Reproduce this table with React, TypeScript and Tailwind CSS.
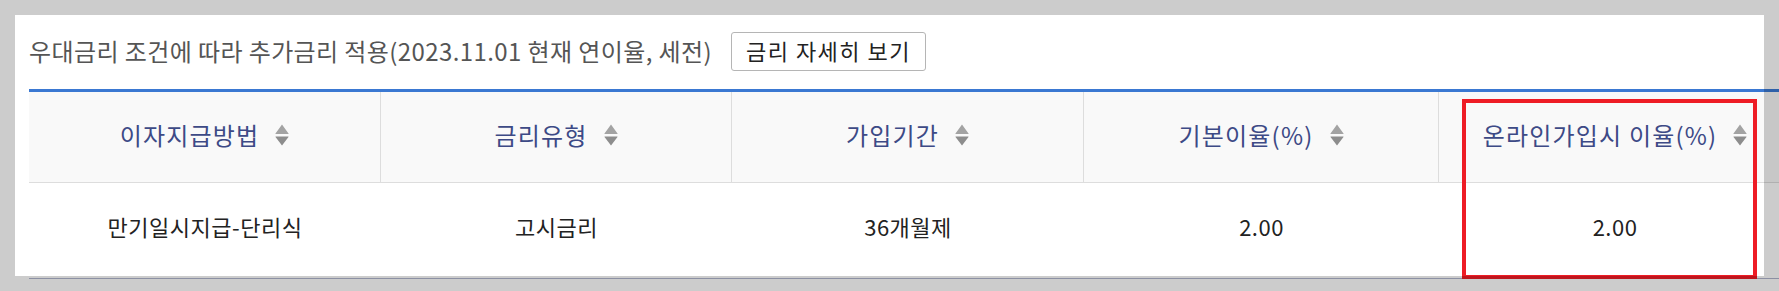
import React from 'react';

const columns = ['이자지급방법', '금리유형', '가입기간', '기본이율(%)', '온라인가입시 이율(%)'];
const row = ['만기일시지급-단리식', '고시금리', '36개월제', '2.00', '2.00'];

function SortIcon() {
  return (
    <svg width="14" height="22" viewBox="0 0 14 22" className="shrink-0">
      <path d="M7 0.5 L13.5 9.5 Q14 10 13 10 L1 10 Q0 10 0.5 9.5 Z" fill="#a3a3a3" />
      <path d="M1 12.5 L13 12.5 Q14 12.5 13.5 13 L7 21.5 L0.5 13 Q0 12.5 1 12.5 Z" fill="#8d8d8d" />
    </svg>
  );
}

export default function App() {
  return (
    <div className="relative h-[291px] w-full overflow-hidden bg-white font-['Noto_Sans_CJK_KR','Noto_Sans',sans-serif]">
      <div className="pl-[29px] pt-[32px]">
        {/* title + button */}
        <div className="flex h-[38px] items-center gap-[19px]">
          <p className="text-[24px] tracking-[0.4px] text-[#555]">
            우대금리 조건에 따라 추가금리 적용(2023.11.01 현재 연이율, 세전)
          </p>
          <button className="flex h-[39px] w-[195px] items-center justify-center rounded-[3px] border border-[#b5b5b5] bg-white pb-[2px] text-[22px] tracking-[1.5px] text-[#222]">
            금리 자세히 보기
          </button>
        </div>

        {/* rate table */}
        <div className="mt-[19px] w-[1762px] border-t-[3px] border-[#3a78d2]">
          <div className="grid grid-cols-[352px_351px_352px_355px_352px] border-b border-[#dddddd] bg-[#f9f9f9]">
            {columns.map((c, i) => (
              <div
                key={c}
                className={
                  'flex h-[90px] items-center justify-center gap-[16px] pb-[4px] text-[24px] tracking-[1.2px] text-[#3d4a86] ' +
                  (i < columns.length - 1 ? 'border-r border-[#dddddd]' : '')
                }
              >
                <span>{c}</span>
                <SortIcon />
              </div>
            ))}
          </div>
          <div className="grid grid-cols-[352px_351px_352px_355px_352px] border-b border-[#b0b4cc]">
            {row.map((v, i) => (
              <div key={i} className="flex h-[95px] items-center justify-center pb-[8px] text-[22px] tracking-[0.5px] text-[#222]">
                {v}
              </div>
            ))}
          </div>
        </div>
      </div>

      {/* red highlight on the online rate column */}
      <div className="pointer-events-none absolute left-[1462px] top-[99px] h-[180px] w-[295px] border-[4px] border-[#ee1c25]" />

      {/* dimmed surround */}
      <div className="pointer-events-none absolute left-[15px] top-[15px] h-[261px] w-[1749px] shadow-[0_0_0_2000px_rgba(0,0,0,0.2)]" />
    </div>
  );
}
